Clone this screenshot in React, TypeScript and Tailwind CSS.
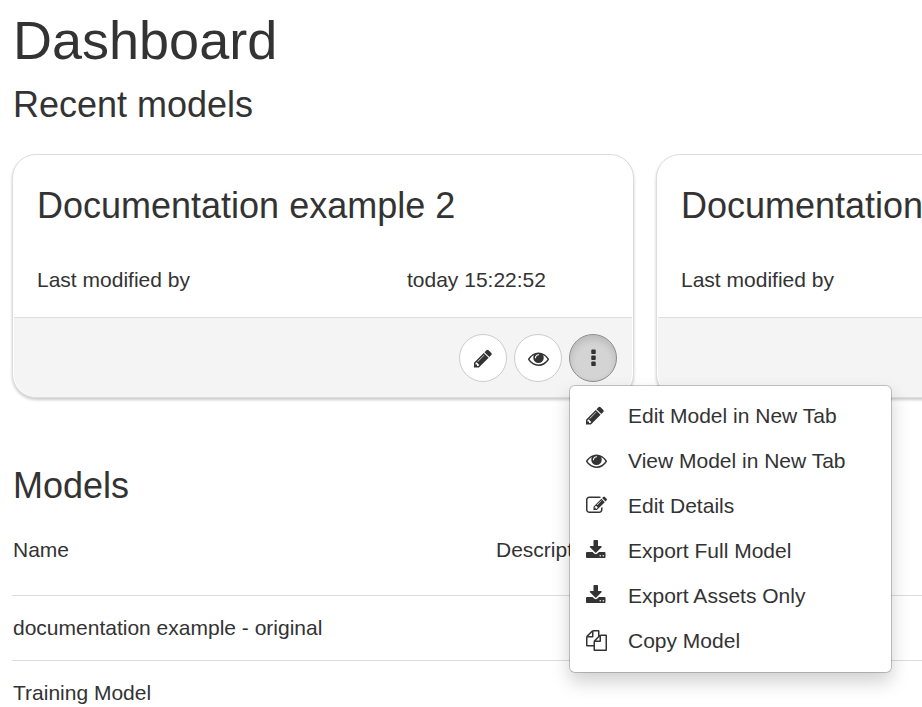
import React from "react";

const glyphs = {
  pencil: {
    box: "128 0 1536 1792",
    d: "M491 1536l91-91-235-235-91 91v107h128v128h107zm523-928q0-22-22-22-10 0-17 7l-542 542q-7 7-7 17 0 22 22 22 10 0 17-7l542-542q7-7 7-17zm-54-192l416 416-832 832h-416v-416zm683 96q0 53-37 90l-166 166-416-416 166-165q36-38 90-38 53 0 91 38l235 234q37 39 37 91z",
  },
  eye: {
    box: "0 0 1792 1792",
    d: "M1664 960q-152-236-381-353 61 104 61 225 0 185-131.5 316.5t-316.5 131.5-316.5-131.5-131.5-316.5q0-121 61-225-229 117-381 353 133 205 333.5 326.5t434.5 121.5 434.5-121.5 333.5-326.5zm-720-384q0-20-14-34t-34-14q-125 0-214.5 89.5t-89.5 214.5q0 20 14 34t34 14 34-14 14-34q0-86 61-147t147-61q20 0 34-14t14-34zm848 384q0 34-20 69-140 230-376.5 368.5t-499.5 138.5-499.5-139-376.5-368q-20-35-20-69t20-69q140-229 376.5-368t499.5-139 499.5 139 376.5 368q20 35 20 69z",
  },
  edit: {
    box: "0 0 1792 1792",
    d: "M888 1184l116-116-152-152-116 116v56h96v96h56zm440-720q-16-16-33 1l-350 350q-17 17-1 33t33-1l350-350q17-17 1-33zm80 594v190q0 119-84.5 203.5t-203.5 84.5h-832q-119 0-203.5-84.5t-84.5-203.5v-832q0-119 84.5-203.5t203.5-84.5h832q63 0 117 25 15 7 18 23 3 17-9 29l-49 49q-14 14-32 8-23-6-45-6h-832q-66 0-113 47t-47 113v832q0 66 47 113t113 47h832q66 0 113-47t47-113v-126q0-13 9-22l64-64q15-15 35-7t20 29zm-96-738l288 288-672 672h-288v-288zm444 132l-92 92-288-288 92-92q28-28 68-28t68 28l152 152q28 28 28 68t-28 68z",
  },
  download: {
    box: "64 0 1792 1792",
    d: "M1344 1344q0-26-19-45t-45-19-45 19-19 45 19 45 45 19 45-19 19-45zm256 0q0-26-19-45t-45-19-45 19-19 45 19 45 45 19 45-19 19-45zm128-224v320q0 40-28 68t-68 28h-1472q-40 0-68-28t-28-68v-320q0-40 28-68t68-28h465l135 136q58 56 136 56t136-56l136-136h464q40 0 68 28t28 68zm-325-569q17 41-14 70l-448 448q-18 19-45 19t-45-19l-448-448q-31-29-14-70 17-39 59-39h256v-448q0-26 19-45t45-19h256q26 0 45 19t19 45v448h256q42 0 59 39z",
  },
  copy: {
    box: "0 0 1792 1792",
    d: "M1696 384q40 0 68 28t28 68v1216q0 40-28 68t-68 28h-960q-40 0-68-28t-28-68v-288h-544q-40 0-68-28t-28-68v-672q0-40 20-88t48-76l408-408q28-28 76-48t88-20h416q40 0 68 28t28 68v328q68-40 128-40h416zm-544 213l-299 299h299v-299zm-640-384l-299 299h299v-299zm196 647l316-316v-416h-384v416q0 40-28 68t-68 28h-416v640h512v-256q0-40 20-88t48-76zm956 804v-1152h-384v416q0 40-28 68t-68 28h-416v640h896z",
  },
  dots: {
    box: "0 0 1792 1792",
    d: "M1088 1248v192q0 40-28 68t-68 28h-192q-40 0-68-28t-28-68v-192q0-40 28-68t68-28h192q40 0 68 28t28 68zm0-512v192q0 40-28 68t-68 28h-192q-40 0-68-28t-28-68v-192q0-40 28-68t68-28h192q40 0 68 28t28 68zm0-512v192q0 40-28 68t-68 28h-192q-40 0-68-28t-28-68v-192q0-40 28-68t68-28h192q40 0 68 28t28 68z",
  },
};

type GlyphName = keyof typeof glyphs;

function Icon({ name }: { name: GlyphName }) {
  return (
    <svg
      viewBox={glyphs[name].box}
      className="h-[21px] w-auto shrink-0 overflow-visible fill-current"
      aria-hidden="true"
    >
      <path d={glyphs[name].d} />
    </svg>
  );
}

const menuItems: { icon: GlyphName; label: string }[] = [
  { icon: "pencil", label: "Edit Model in New Tab" },
  { icon: "eye", label: "View Model in New Tab" },
  { icon: "edit", label: "Edit Details" },
  { icon: "download", label: "Export Full Model" },
  { icon: "download", label: "Export Assets Only" },
  { icon: "copy", label: "Copy Model" },
];

function ModelMenu() {
  return (
    <ul
      role="menu"
      className="absolute top-full left-0 z-10 mt-[3px] w-[323px] rounded-md border border-black/20 bg-white bg-clip-padding pt-[7px] pb-[9px] shadow-[0_9px_18px_rgba(0,0,0,0.18)]"
    >
      {menuItems.map((item) => (
        <li key={item.label} role="none">
          <button
            type="button"
            role="menuitem"
            className="flex h-[45px] w-full items-center px-4 text-left hover:bg-gray-100"
          >
            <span className="flex w-[42px]">
              <Icon name={item.icon} />
            </span>
            {item.label}
          </button>
        </li>
      ))}
    </ul>
  );
}

const round =
  "flex size-12 items-center justify-center rounded-full border border-[#ccc] bg-white hover:bg-gray-100";

function ModelCard({ title, modified, open }: { title: string; modified?: string; open?: boolean }) {
  return (
    <article className="w-[622px] shrink-0 rounded-3xl border border-[#ddd] bg-white shadow-[0_2px_3px_rgba(0,0,0,0.2)]">
      <div className="px-6 pt-[31px] pb-[22px]">
        <h3 className="text-4xl/[40px] whitespace-nowrap">{title}</h3>
        <div className="mt-[39px] flex">
          <p className="w-[370px]">Last modified by</p>
          {modified && <p>{modified}</p>}
        </div>
      </div>
      <div className="mx-px flex justify-end gap-[7px] rounded-b-[23px] border-t border-[#ddd] bg-[#f4f4f4] px-[15px] pt-4 pb-[15px]">
        <button type="button" aria-label="Edit model" className={round}>
          <Icon name="pencil" />
        </button>
        <button type="button" aria-label="View model" className={round}>
          <Icon name="eye" />
        </button>
        <div className="relative">
          <button
            type="button"
            aria-label="More actions"
            aria-haspopup="menu"
            aria-expanded={!!open}
            className={
              open
                ? "flex size-12 items-center justify-center rounded-full border border-[#8c8c8c] bg-[#d4d4d4] shadow-[inset_0_4px_7px_rgba(0,0,0,0.125)]"
                : round
            }
          >
            <Icon name="dots" />
          </button>
          {open && <ModelMenu />}
        </div>
      </div>
    </article>
  );
}

const models = ["documentation example - original", "Training Model"];

export default function App() {
  return (
    <main className="h-screen overflow-hidden bg-white pt-[10px] pl-3 font-['Liberation_Sans',Arial,sans-serif] text-[21px]/[30px] text-[#333]">
      <h1 className="px-px text-[54px]/[60px]">Dashboard</h1>
      <section className="mt-[15px]">
        <h2 className="px-px text-4xl/[40px]">Recent models</h2>
        <div className="mt-[29px] flex gap-[22px]">
          <ModelCard title="Documentation example 2" modified="today 15:22:52" open />
          <ModelCard title="Documentation example" />
        </div>
      </section>
      <section className="mt-[68px]">
        <h2 className="px-px text-4xl/[40px]">Models</h2>
        <table className="mt-[29px] w-full table-fixed border-collapse text-left">
          <thead>
            <tr>
              <th scope="col" className="w-[483px] px-px pb-[30px] font-normal">
                Name
              </th>
              <th scope="col" className="px-px pb-[30px] font-normal">
                Description
              </th>
            </tr>
          </thead>
          <tbody>
            {models.map((name) => (
              <tr key={name} className="border-t border-[#ddd]">
                <td className="px-px py-[17px]">{name}</td>
                <td />
              </tr>
            ))}
          </tbody>
        </table>
      </section>
    </main>
  );
}
